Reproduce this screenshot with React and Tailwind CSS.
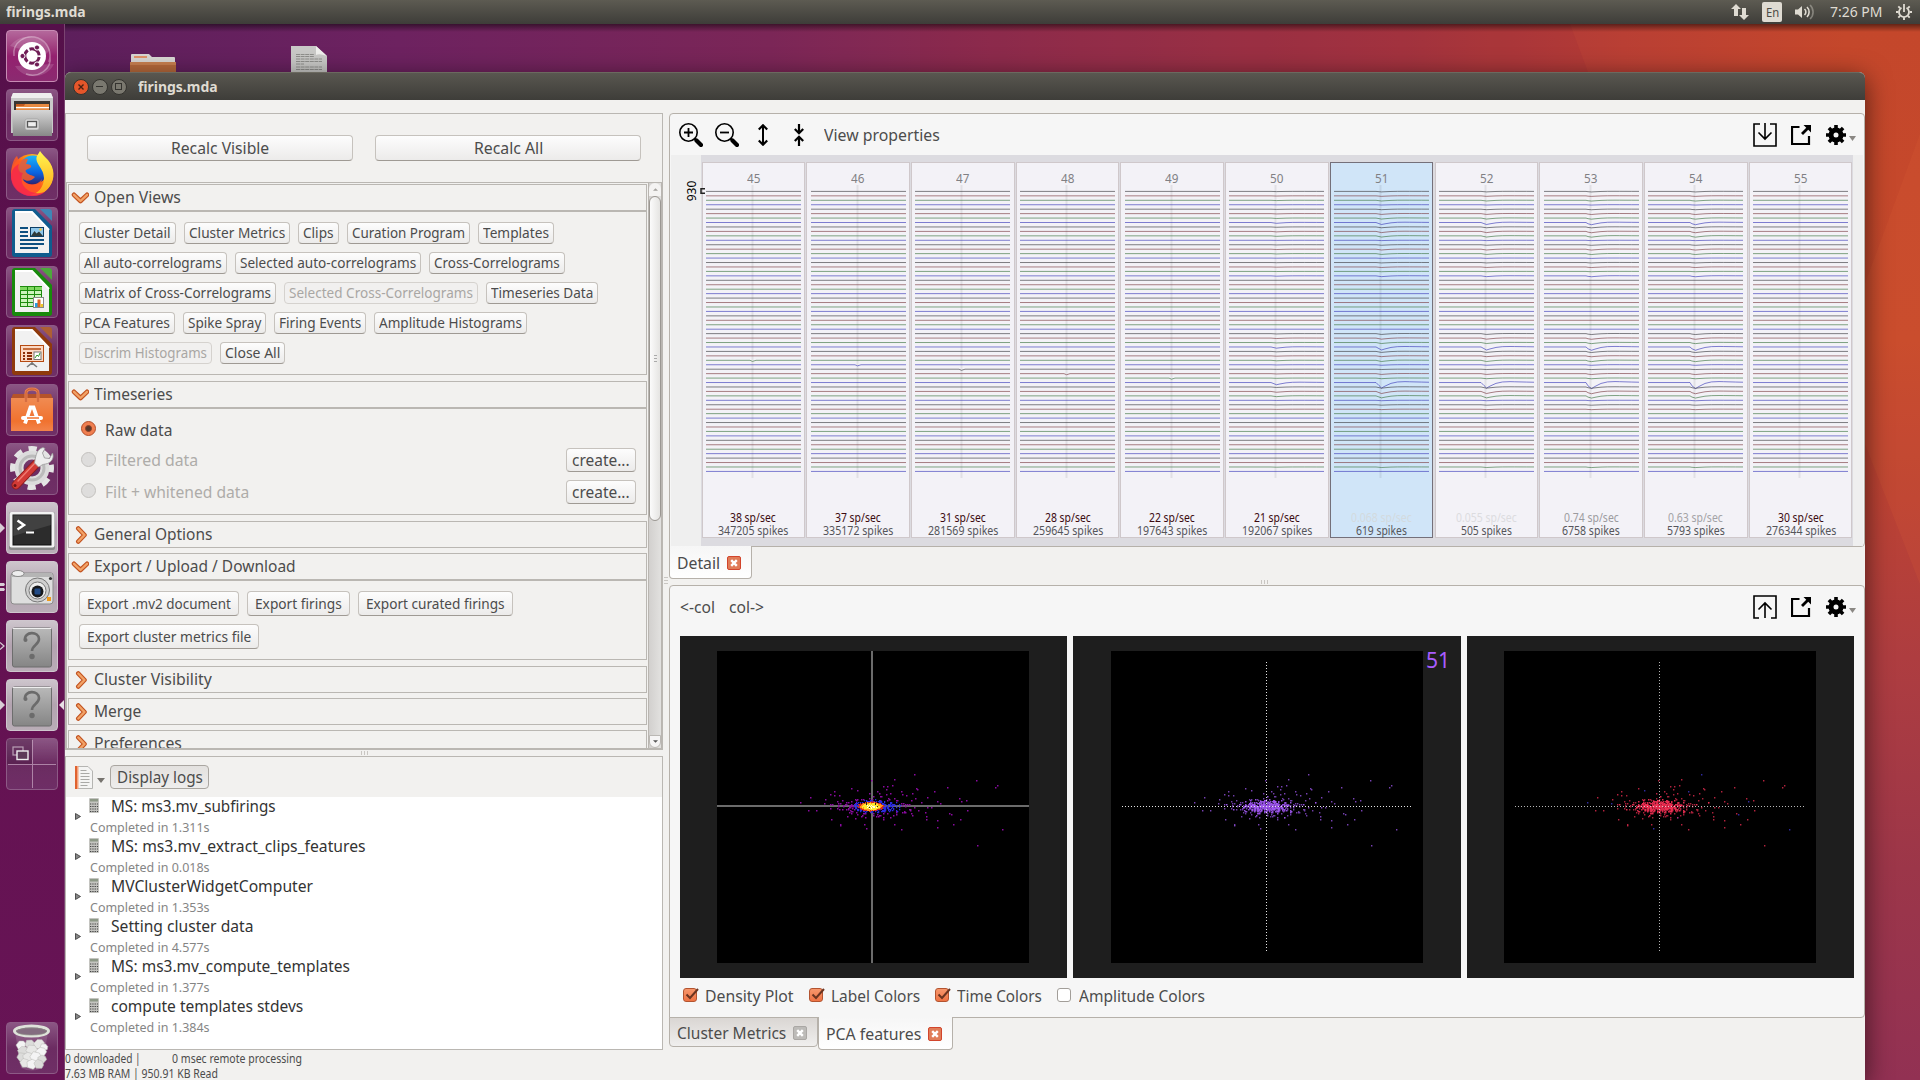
import React, { useLayoutEffect, useRef, useState } from "react";

/* ---------- text helper: condenses a label to a given width ---------- */
function Fit({ w, className = "", children }) {
  const ref = useRef(null);
  const [k, setK] = useState(1);
  useLayoutEffect(() => {
    const n = ref.current.offsetWidth;
    if (n) setK(w / n);
  }, [w]);
  return (
    <span className={"inline-flex shrink-0 leading-none whitespace-nowrap " + className} style={{ width: w }}>
      <span ref={ref} className="inline-block shrink-0 origin-left whitespace-pre" style={{ transform: `scaleX(${k})` }}>
        {children}
      </span>
    </span>
  );
}

/* ---------- seeded random numbers ---------- */
function rng(seed) {
  let s = seed;
  return () => {
    s = (s * 1664525 + 1013904223) % 4294967296;
    return s / 4294967296;
  };
}

/* ---------- top bar ---------- */
function TopBar() {
  return (
    <header className="relative z-20 flex h-6 shrink-0 items-center bg-gradient-to-b from-[#5d5b52] to-[#3e3d39] pr-2 pl-1.5 text-[#dfdbd2]">
      <Fit w={80} className="mb-px text-[15px] font-bold">firings.mda</Fit>
      <div className="ml-auto flex items-center">
        <svg className="h-[18px] w-[18px]" viewBox="0 0 18 18" fill="#dfdbd2">
          <path d="M5 1l5 5H7v7H3V6H0zM13 17l-5-5h3V5h4v7h3z" />
        </svg>
        <div className="ml-[13px] flex h-5 w-5 items-center justify-center rounded-[2px] bg-[#dfdbd2] text-[#4b4a44]">
          <Fit w={13} className="mt-px text-[13px]">En</Fit>
        </div>
        <svg className="ml-[13px] h-4 w-5" viewBox="0 0 20 16" fill="none" stroke="#dfdbd2" strokeWidth="1.6">
          <path d="M0 5.500h3l4-3.500v12l-4-3.500H0z" fill="#dfdbd2" stroke="none" />
          <path d="M9.500 5a4 4 0 0 1 0 6" />
          <path d="M12 3a7 7 0 0 1 0 10" />
          <path d="M15 1a9.500 9.500 0 0 1 0 14" opacity=".4" />
        </svg>
        <Fit w={52} className="ml-[15px] mb-px text-[14.500px]">7:26 PM</Fit>
        <svg className="ml-[14px] h-4 w-4" viewBox="0 0 16 16" fill="none" stroke="#dfdbd2">
          <path d="M5.500 3.700a5 5 0 1 0 5 0" strokeWidth="1.800" />
          <path d="M8 0v8" strokeWidth="1.800" />
          <path d="M0 8h2.500M13.500 8H16M8 13.500V16M2.300 2.300l1.800 1.800M13.700 2.300l-1.800 1.800M2.300 13.700l1.800-1.800M13.700 13.700l-1.800-1.800" strokeWidth="1.900" />
        </svg>
      </div>
    </header>
  );
}

/* ---------- launcher ---------- */
const Ico = ({ children }) => (
  <svg className="h-[52px] w-[52px] shrink-0" viewBox="0 0 52 52">{children}</svg>
);

const UbuntuIcon = () => (
  <Ico>
    <path d="M8 26C6 12 20 4 32 8c10 4 14 14 11 24M44 26c2 14-12 22-24 18" fill="none" stroke="#fff" strokeOpacity=".35" strokeWidth="1.500" />
    <path d="M4 16C14 2 36 4 44 20L38 26z M48 34C40 50 18 50 9 36z" fill="#fff" fillOpacity=".14" />
    <circle cx="26" cy="26" r="14" fill="#fff" />
    <circle cx="26" cy="26" r="7.200" fill="none" stroke="#6f1c55" strokeWidth="3" strokeDasharray="13.100 2" strokeDashoffset="-1" />
    <circle cx="16.500" cy="26" r="2.600" fill="#6f1c55" stroke="#fff" strokeWidth="1" />
    <circle cx="31" cy="17.500" r="2.600" fill="#6f1c55" stroke="#fff" strokeWidth="1" />
    <circle cx="31" cy="34.500" r="2.600" fill="#6f1c55" stroke="#fff" strokeWidth="1" />
  </Ico>
);

const FilesIcon = () => (
  <Ico>
    <defs>
      <linearGradient id="cab" x1="0" y1="0" x2="0" y2="1"><stop offset="0" stopColor="#d6d6d6" /><stop offset="1" stopColor="#888" /></linearGradient>
    </defs>
    <path d="M7 4h38l2 5v35H5V9z" fill="#c9c9c9" />
    <path d="M7 4h38l2 5H5z" fill="#eee" />
    <path d="M8 12h36v10H8z" fill="#3a3632" />
    <path d="M10 15h33v7H10z" fill="#c25a1e" />
    <path d="M10 17h8l1-2h24v7H10z" fill="#e88b42" />
    <path d="M10 18h33v1.200H10z" fill="#fff" />
    <path d="M6 21h40v26H7z" fill="url(#cab)" />
    <rect x="19" y="30" width="14" height="11" rx="2" fill="#d9d9d9" stroke="#999" strokeWidth=".6" />
    <rect x="21.500" y="32.500" width="9" height="5.500" fill="#eee" stroke="#555" strokeWidth="1.300" />
  </Ico>
);

const FirefoxIcon = () => (
  <Ico>
    <defs>
      <linearGradient id="ffA" x1="1" y1="0" x2="0.100" y2=".8"><stop offset="0" stopColor="#fff04a" /><stop offset=".4" stopColor="#ff9a10" /><stop offset=".7" stopColor="#ff4425" /><stop offset="1" stopColor="#e31587" /></linearGradient>
      <linearGradient id="ffB" x1="0" y1="0" x2="0" y2="1"><stop offset="0" stopColor="#18b5fa" /><stop offset=".6" stopColor="#0a62e0" /><stop offset="1" stopColor="#2b2270" /></linearGradient>
      <linearGradient id="ffC" x1="0" y1="0" x2="0" y2="1"><stop offset="0" stopColor="#fff650" /><stop offset="1" stopColor="#ffa516" /></linearGradient>
    </defs>
    <circle cx="26" cy="27" r="21" fill="url(#ffA)" />
    <circle cx="27" cy="22" r="14.500" fill="url(#ffB)" />
    <path d="M5 27C5 18 8 10 11 8l2 5c3 0 6-3 9-2l-2 5c3 0 6 1 5 3s-7 2-5 5c2 3 6 3 9 5-3 4-8 5-12 2 2 7 14 8 19 0l-4 15C18 50 6 42 5 27z" fill="#ff5a22" opacity=".85" />
    <path d="M34 3c2 3 5 6 8 9 7 8 7 19 2 26-5 8-14 10-20 9 8-1 14-8 14-17C38 20 28 15 31 8z" fill="url(#ffC)" />
    <path d="M5 28c0 12 9 20 21 20 5 0 9-1 13-4-9 3-18 0-22-7-2-4-2-9 0-12-4 0-6-5-4-9-4 2-8 6-8 12z" fill="#f4234f" opacity=".75" />
  </Ico>
);

function OfficeIcon({ a, b, kind }) {
  return (
    <Ico>
      <path d="M9 2h20l17 17v28q0 3-3 3H9q-3 0-3-3V5q0-3 3-3z" fill={b} />
      <path d="M34 2h9q3 0 3 3v9z" fill={a} />
      <path d="M9 5h17l17 18v23H9z" fill="#f1f1f1" />
      <path d="M9 5h17l17 18" fill="none" stroke="#fff" strokeWidth="2" />
      {kind === "w" && (
        <g>
          <path d="M14 21h8M14 25h8M14 29h8M14 33h24M14 37h24M14 41h18" stroke="#0d4f80" strokeWidth="2" />
          <rect x="24.500" y="20.500" width="13" height="9" fill="#8fc7ea" stroke="#0d3f66" />
          <path d="M25 29l3.500-5 2 2.500 2.500-2 4 4.500z" fill="#2e3a3a" />
          <circle cx="34.500" cy="22.500" r="1.200" fill="#f6c834" />
        </g>
      )}
      {kind === "c" && (
        <g>
          <rect x="14.500" y="20.500" width="21" height="20" fill="#cdf3bd" stroke="#1d8a0e" />
          <path d="M14 21h22v3H14z" fill="#7fd960" />
          <path d="M14 24.500h22M14 28.500h22M14 32.500h22M14 36.500h22M21.500 21v20M28.500 21v20" stroke="#1d8a0e" />
          <rect x="27.500" y="31.500" width="10" height="10" fill="#fff" stroke="#888" />
          <path d="M29 37h3v4h-3z" fill="#2a9fe0" /><path d="M31.500 33.500h3V41h-3z" fill="#e0641f" /><path d="M34.500 38h2.500v3h-2.500z" fill="#efc52b" />
        </g>
      )}
      {kind === "i" && (
        <g>
          <rect x="14.500" y="20.500" width="23" height="16" fill="#fbd9c4" stroke="#b54a12" />
          <path d="M17 24h18" stroke="#b54a12" strokeWidth="1.500" />
          <path d="M17 28h2M17 31h2M17 34h2M21 28h5M21 31h5M21 34h5" stroke="#8b2e08" strokeWidth="1.800" />
          <rect x="28" y="27" width="7" height="7.500" fill="#fff" stroke="#777" />
          <path d="M29 33l2-3 1.500 1.500L34 28" fill="none" stroke="#2e9d2b" />
          <path d="M26 37v3M21 42l5-4 5 4" stroke="#777" strokeWidth="1.600" fill="none" />
        </g>
      )}
    </Ico>
  );
}

const SoftwareIcon = () => (
  <Ico>
    <defs><linearGradient id="bag" x1="0" y1="0" x2="0" y2="1"><stop offset="0" stopColor="#f08b52" /><stop offset=".7" stopColor="#f0722f" /><stop offset="1" stopColor="#f2844b" /></linearGradient></defs>
    <path d="M7 10h38l2 5H5z" fill="#b5532a" />
    <path d="M5 14h42v33H5z" fill="url(#bag)" />
    <path d="M20 18V9q0-4 6-4t6 4v9" fill="none" stroke="#e78052" strokeWidth="3" />
    <path d="M20 18V9q0-4 6-4t6 4v9" fill="none" stroke="#b94f24" strokeWidth=".7" />
    <path d="M19 39.500l5.500-16h3l5.500 16" fill="none" stroke="#fff" strokeWidth="3.800" />
    <path d="M17 34h18" stroke="#fff" strokeWidth="4" strokeLinecap="round" />
    <path d="M21 34h12" stroke="#f0742f" strokeWidth="1.500" />
  </Ico>
);

const SettingsIcon = () => (
  <Ico>
    <circle cx="26" cy="25" r="13" fill="none" stroke="#dcdcdc" strokeWidth="9" />
    <circle cx="26" cy="25" r="19.500" fill="none" stroke="#e4e4e4" strokeWidth="5" strokeDasharray="8.300 7" strokeDashoffset="4" />
    <circle cx="26" cy="25" r="12" fill="none" stroke="#bbb" strokeWidth="3" />
    <path d="M10 42L30 21" stroke="#8f1c1c" strokeWidth="9" strokeLinecap="round" />
    <path d="M10 42L30 21" stroke="#d23a35" strokeWidth="7" strokeLinecap="round" />
    <path d="M12 38L29 20" stroke="#ef7a70" strokeWidth="1.500" strokeLinecap="round" />
    <circle cx="9" cy="42.500" r="1.500" fill="#6b1414" />
    <path d="M29 17c1-5 2-11 8-12.500l2 1-2.500 4.500 2 5 5 .5L46.500 10c2 5-1 9-5 10.500-3 1-5 .5-7 2.500l-2 1-4-4z" fill="#eee" stroke="#999" strokeWidth=".8" />
  </Ico>
);

const TerminalIcon = () => (
  <Ico>
    <rect x="3" y="10" width="46" height="38" rx="2" fill="#8a8a8a" />
    <rect x="3.500" y="10" width="45" height="35.500" rx="2" fill="#f3f3f3" />
    <rect x="7" y="13" width="38" height="30" fill="#2c2c2c" stroke="#111" />
    <path d="M7 13h38v10L7 34z" fill="#fff" opacity=".1" />
    <path d="M11.500 18.500l6.500 4.500-6.500 4.500" fill="none" stroke="#fff" strokeWidth="2.500" />
    <path d="M20 30.500h8" stroke="#fff" strokeWidth="2" />
  </Ico>
);

const CameraIcon = () => (
  <Ico>
    <path d="M7 12h38q2 0 2 2v26q0 3-3 3H8q-3 0-3-3V15q0-3 2-3z" fill="#dedede" stroke="#8b8b8b" />
    <path d="M6 12h40v4H6z" fill="#b5b5b5" />
    <ellipse cx="12" cy="12.500" rx="6" ry="3" fill="#eee" stroke="#777" strokeWidth=".8" />
    <circle cx="31.500" cy="29" r="12" fill="#cfcfcf" stroke="#777" />
    <circle cx="31.500" cy="29.500" r="8.500" fill="#eee" stroke="#777" />
    <circle cx="31.500" cy="30.500" r="6" fill="#16181c" />
    <rect x="28.500" y="27.500" width="6" height="6" rx="1" fill="#214a86" />
    <circle cx="44.500" cy="17.500" r="1.600" fill="#333" />
    <path d="M41 36h4v4h-4z" fill="#f09a1a" />
  </Ico>
);

const UnknownIcon = () => (
  <Ico>
    <defs><linearGradient id="unk" x1="0" y1="0" x2="0" y2="1"><stop offset="0" stopColor="#b9b9b9" /><stop offset="1" stopColor="#858585" /></linearGradient></defs>
    <rect x="6.500" y="8" width="39" height="39" rx="2" fill="url(#unk)" stroke="#6d6d6d" />
    <path d="M7 8.500h38" stroke="#eee" />
    <path d="M19 20c-1-9 14-9 14-1 0 6-7 6-7 12" fill="none" stroke="#6b6b6b" strokeWidth="2.600" />
    <circle cx="19.500" cy="20" r="2" fill="#6b6b6b" />
    <circle cx="26" cy="36.500" r="2.700" fill="#6b6b6b" />
  </Ico>
);

const WorkspaceIcon = () => (
  <Ico>
    <path d="M0 0h26v26H0z" fill="#3b1036" opacity=".35" />
    <path d="M26.500 2v48M2 26.500h48" stroke="#d9bcd4" strokeWidth="1" opacity=".6" />
    <rect x="7" y="9" width="10" height="8" fill="none" stroke="#b9a0b5" strokeWidth="1.200" />
    <rect x="11" y="13" width="11" height="8.500" fill="#5d3a58" stroke="#eee" strokeWidth="1.400" />
  </Ico>
);

const TrashIcon = () => {
  const bits = [
    [15, 23, 5], [24, 22, 5], [33, 22, 5.5], [38, 25, 4], [17, 29, 5.5], [26, 28, 6], [35, 30, 5.5],
    [16, 35, 5], [22, 35, 5.5], [30, 35, 6], [36, 37, 4.5], [19, 41, 5], [26, 42, 5.5], [33, 42, 5],
  ];
  return (
    <Ico>
      <path d="M9 10l6 36q11 5 21 0l6-36z" fill="#fff" opacity=".13" />
      {bits.map(([x, y, q], i) => (
        <path key={i} transform={`translate(${x} ${y}) rotate(${(i * 47) % 90})`} d={`M${-q} 0L${-q / 3} ${-q * 0.8}L${q * 0.5} ${-q * 0.8}L${q} ${-q / 4}L${q * 0.6} ${q * 0.8}L${-q / 2} ${q * 0.9}z`} fill={["#f4f4f4", "#dcdcda", "#e8e8e6"][i % 3]} stroke="#bcbcb9" strokeWidth=".5" />
      ))}
      <ellipse cx="25.500" cy="9" rx="17" ry="5" fill="#7a6677" stroke="#dfe2da" strokeWidth="3" />
      <ellipse cx="25.500" cy="9.500" rx="15" ry="3.500" fill="#846c80" stroke="#8d8d85" strokeWidth=".7" />
    </Ico>
  );
};

const TILE = {
  dark: "bg-gradient-to-b from-[#8b5684] via-[#6c2c62] to-[#6f2f66] border-[#8d5a86]",
  ubuntu: "bg-gradient-to-b from-[#b4689c] via-[#94206f] to-[#8b2a70] border-[#c78bb4]",
  light: "bg-gradient-to-b from-[#cdc5cc] via-[#b3a3b0] to-[#b9adb7] border-[#cfc6ce]",
};

const tiles = [
  { t: "ubuntu", i: <UbuntuIcon /> },
  { t: "dark", i: <FilesIcon /> },
  { t: "dark", i: <FirefoxIcon /> },
  { t: "dark", i: <OfficeIcon a="#3f86b5" b="#0f5c8e" kind="w" /> },
  { t: "dark", i: <OfficeIcon a="#4da83c" b="#188a0c" kind="c" /> },
  { t: "dark", i: <OfficeIcon a="#ad5f34" b="#8f3a0c" kind="i" /> },
  { t: "dark", i: <SoftwareIcon /> },
  { t: "dark", i: <SettingsIcon /> },
  { t: "light", i: <TerminalIcon />, l: "one" },
  { t: "light", i: <CameraIcon />, l: "two" },
  { t: "light", i: <UnknownIcon />, l: "open" },
  { t: "light", i: <UnknownIcon />, l: "one", r: true },
  { t: "dark", i: <WorkspaceIcon /> },
];

function Tile({ t, i, l, r }) {
  return (
    <div className="relative flex shrink-0 justify-center">
      {l && (
        <svg className="absolute top-[20px] left-0 h-3 w-[5px]" viewBox="0 0 5 12" fill="#d8cdd6">
          {l === "one" && <path d="M0 1l5 5-5 5z" />}
          {l === "open" && <path d="M0 2.500L4 6 0 9.500" fill="none" stroke="#d8cdd6" strokeWidth="1.200" />}
          {l === "two" && <path d="M0 2h4l1 1.500L4 5H0zM0 7h4l1 1.500L4 10H0z" />}
        </svg>
      )}
      <div className={"flex h-[52px] w-[52px] items-center justify-center overflow-hidden rounded-[4px] border " + TILE[t]}>{i}</div>
      {r && (
        <svg className="absolute top-[20px] right-0 h-3 w-[5px]" viewBox="0 0 5 12" fill="#e8e0e6"><path d="M5 1L0 6l5 5z" /></svg>
      )}
    </div>
  );
}

function Launcher() {
  return (
    <nav className="relative z-10 flex w-[65px] shrink-0 flex-col gap-[7px] border-r border-[#7b4471] bg-gradient-to-b from-[#55104a] via-[#631151] to-[#671455] pt-1.5 pb-1.5">
      {tiles.map((x, n) => <Tile key={n} {...x} />)}
      <div className="mt-auto"><Tile t="dark" i={<TrashIcon />} /></div>
    </nav>
  );
}

/* ---------- left panel ---------- */
function Btn({ w, h = "h-[22px]", pad = 5, size = "text-[14.500px]", shift = "mb-px", off, children }) {
  return (
    <button
      className={
        "flex shrink-0 items-center justify-center rounded-[4px] border " + h + " " + size +
        (off
          ? " border-[#d5d2ce] bg-[#f1f0ef] text-[#a9a7a4]"
          : " border-[#c6c2bd] border-b-[#9f9a94] bg-gradient-to-b from-[#fdfdfd] to-[#ecebea] text-[#4c4c4c]")
      }
      style={{ width: w }}
    >
      <Fit w={w - 2 * pad} className={shift}>{children}</Fit>
    </button>
  );
}

function Chevron({ open }) {
  return (
    <svg className="h-[18px] w-[18px]" viewBox="0 0 18 18" fill="none" strokeLinecap="round" strokeLinejoin="round">
      <g transform={open ? "translate(.5 0)" : "rotate(-90 9 9) translate(0 1.5)"}>
        <path d="M2.500 5.800L9 12l6.500-6.200" stroke="#c2521f" strokeWidth="4.600" />
        <path d="M2.500 5.800L9 12l6.500-6.200" stroke="#f2a266" strokeWidth="2.400" />
      </g>
    </svg>
  );
}

function Header({ title, w, open, className = "" }) {
  return (
    <div className={"flex h-[27px] shrink-0 items-center border border-[#bab7b2] pl-[2px] " + className}>
      <Chevron open={open} />
      <Fit w={w} className="ml-[5px] text-[16.500px]">{title}</Fit>
    </div>
  );
}

const viewRows = [
  [["Cluster Detail", 97], ["Cluster Metrics", 106], ["Clips", 41], ["Curation Program", 123], ["Templates", 76]],
  [["All auto-correlograms", 148], ["Selected auto-correlograms", 186], ["Cross-Correlograms", 136]],
  [["Matrix of Cross-Correlograms", 197], ["Selected Cross-Correlograms", 194, true], ["Timeseries Data", 112]],
  [["PCA Features", 96], ["Spike Spray", 83], ["Firing Events", 92], ["Amplitude Histograms", 153]],
  [["Discrim Histograms", 133, true], ["Close All", 65]],
];

function Radio({ on }) {
  return on ? (
    <span className="flex h-[15px] w-[15px] items-center justify-center rounded-full border border-[#b4502b] bg-[#f07f50]">
      <span className="h-[7px] w-[7px] rounded-full border border-[#8b4127] bg-[#59382b]" />
    </span>
  ) : (
    <span className="h-[15px] w-[15px] rounded-full border border-[#c3c1be] bg-[#dedddc]" />
  );
}

function Series({ label, w, on, h }) {
  return (
    <div className={"flex items-center " + h + (on ? "" : " text-[#aeaca9]")}>
      <Radio on={on} />
      <Fit w={w} className="mt-[3px] ml-[9px] text-[16.500px]">{label}</Fit>
      {!on && <div className="mt-[2px] mr-[10px] ml-auto"><Btn w={70} h="h-6" pad={6} size="text-[16px]" shift="">create...</Btn></div>}
    </div>
  );
}

function ScrollBar() {
  return (
    <div className="flex w-[14px] shrink-0 flex-col border-x border-[#b9b5b0] bg-gradient-to-r from-[#d2d0ce] to-[#e2e1df]">
      <div className="flex h-[13px] shrink-0 items-center justify-center rounded-t-full bg-[#f4f3f2] text-[#a5a29e]">
        <svg className="h-[3px] w-[5px]" viewBox="0 0 6 3" fill="currentColor"><path d="M3 0l3 3H0z" /></svg>
      </div>
      <div className="flex h-[325px] shrink-0 items-center justify-center rounded-[6px] border border-[#9b9792] bg-gradient-to-r from-[#fbfbfb] to-[#e5e4e2]">
        <div className="flex w-[3px] flex-col gap-[2px]"><i className="h-px bg-[#aaa]" /><i className="h-px bg-[#aaa]" /><i className="h-px bg-[#aaa]" /></div>
      </div>
      <div className="grow" />
      <div className="flex h-[13px] shrink-0 items-center justify-center rounded-b-full border border-[#bbb8b4] bg-[#f6f5f5] text-[#555]">
        <svg className="h-[3px] w-[5px]" viewBox="0 0 6 3" fill="currentColor"><path d="M0 0h6L3 3z" /></svg>
      </div>
    </div>
  );
}

function Controls() {
  return (
    <section className="flex h-[637px] shrink-0 flex-col border border-b-2 border-[#bab7b2]">
      <div className="flex h-[68px] shrink-0 gap-[22px] pt-[21px] pl-[21px]">
        <Btn w={266} h="h-[26px]" pad={84} size="text-[16.500px]" shift="mt-px">Recalc Visible</Btn>
        <Btn w={266} h="h-[26px]" pad={98.5} size="text-[16.500px]" shift="mt-px">Recalc All</Btn>
      </div>
      <div className="flex min-h-0 grow border-t border-[#bab7b2]">
        <div className="flex min-w-0 grow flex-col overflow-hidden border-l border-[#bab7b2] pt-px pr-px pl-px">
          <Header open title="Open Views" w={87} />
          <div className="flex h-[164px] shrink-0 flex-col gap-2 border border-[#bab7b2] pt-[10px] pl-[10px]">
            {viewRows.map((row, i) => (
              <div key={i} className="flex gap-2">
                {row.map(([t, w, off]) => <Btn key={t} w={w} off={off}>{t}</Btn>)}
              </div>
            ))}
          </div>
          <Header open title="Timeseries" w={79} className="mt-[6px]" />
          <div className="flex h-[107px] shrink-0 flex-col border border-[#bab7b2] pt-1 pl-[12px]">
            <Series on label="Raw data" w={67} h="h-[31px]" />
            <Series label="Filtered data" w={93} h="h-[30px]" />
            <Series label="Filt + whitened data" w={144} h="h-[33px]" />
          </div>
          <Header title="General Options" w={118} className="mt-[6px]" />
          <Header open title="Export / Upload / Download" w={202} className="mt-[5px]" />
          <div className="flex h-[80px] shrink-0 flex-col gap-2 border border-[#bab7b2] pt-[10px] pl-[10px]">
            <div className="flex gap-2">
              <Btn w={160} h="h-[25px]" pad={8}>Export .mv2 document</Btn>
              <Btn w={103} h="h-[25px]" pad={8}>Export firings</Btn>
              <Btn w={155} h="h-[25px]" pad={8}>Export curated firings</Btn>
            </div>
            <Btn w={180} h="h-[25px]" pad={8}>Export cluster metrics file</Btn>
          </div>
          <Header title="Cluster Visibility" w={118} className="mt-[6px]" />
          <Header title="Merge" w={47} className="mt-[5px]" />
          <Header title="Preferences" w={88} className="mt-[5px]" />
        </div>
        <ScrollBar />
      </div>
    </section>
  );
}

const logs = [
  ["MS: ms3.mv_subfirings", 165, "1.311s"],
  ["MS: ms3.mv_extract_clips_features", 255, "0.018s"],
  ["MVClusterWidgetComputer", 202, "1.353s"],
  ["Setting cluster data", 142, "4.577s"],
  ["MS: ms3.mv_compute_templates", 239, "1.377s"],
  ["compute templates stdevs", 192, "1.384s"],
];

function Logs() {
  return (
    <section className="flex h-[294px] shrink-0 flex-col border border-[#bab7b2]">
      <div className="flex h-10 shrink-0 items-center pl-[9px]">
        <svg className="h-[23px] w-[18px]" viewBox="0 0 18 23">
          <path d="M1 .5h12l4.500 4.500v17.500H1z" fill="#f4f4f3" stroke="#b5b5b2" />
          <path d="M0 0h2.500v23H0z" fill="#e0622f" />
          <path d="M2 0h1.500v23H2z" fill="#f3a27d" />
          <path d="M5.500 4.500h6M5.500 7.500h9M5.500 10.500h9M5.500 13.500h9M5.500 16.500h9M5.500 19.500h7" stroke="#a9a9a6" />
        </svg>
        <svg className="mt-1.5 ml-1 h-[5px] w-[8px]" viewBox="0 0 8 5"><path d="M0 0h8L4 5z" fill="#77746f" /></svg>
        <button className="ml-[5px] flex h-6 w-[99px] items-center justify-center rounded-[4px] border border-[#aaa6a1] bg-gradient-to-b from-[#e3e1df] to-[#eeedec] text-[16.500px]">
          <Fit w={86} className="ml-px">Display logs</Fit>
        </button>
      </div>
      <ul className="grow bg-white">
        {logs.map(([t, w, s], i) => (
          <li key={i} className="relative flex h-10 pl-[23px]">
            <svg className="absolute top-[16px] left-[9px] h-[7px] w-[6px]" viewBox="0 0 6 7"><path d="M.5.5L5.500 3.500l-5 3z" fill="#888" stroke="#333" strokeWidth=".8" /></svg>
            <div className="flex flex-col">
              <div className="flex h-[20px] items-start">
                <svg className="mt-px h-[15px] w-[10px]" viewBox="0 0 10 15">
                  <rect width="10" height="15" rx="1" fill="#c4c4c0" />
                  <path d="M1 1h8v2.500H1z" fill="#8d9886" />
                  <path d="M1 6h8M1 8.500h8M1 11h8M1 13.500h8" stroke="#444" strokeWidth="1.200" strokeDasharray="1.300 1" />
                </svg>
                <Fit w={w} className="mt-px ml-[12px] text-[16.500px] text-[#333]">{t}</Fit>
              </div>
              <Fit w={120} className="mt-1 ml-px text-[13px] text-[#858585]">{"Completed in " + s}</Fit>
            </div>
          </li>
        ))}
      </ul>
    </section>
  );
}

function StatusLines() {
  return (
    <footer className="flex flex-col gap-[3px] pt-[3px] text-[12px] text-[#4c4c4c]">
      <div className="flex gap-[31px]">
        <Fit w={76}>0 downloaded |</Fit>
        <Fit w={130}>0 msec remote processing</Fit>
      </div>
      <Fit w={153}>7.63 MB RAM | 950.91 KB Read</Fit>
    </footer>
  );
}

/* ---------- templates view ---------- */
const cols = [
  { n: 45, r: "38", s: 347205, dip: 38 },
  { n: 46, r: "37", s: 335172, dip: 39 },
  { n: 47, r: "31", s: 281569, dip: 40 },
  { n: 48, r: "28", s: 259645, dip: 41 },
  { n: 49, r: "22", s: 197643, dip: 42 },
  { n: 50, r: "21", s: 192067, k: 0.4 },
  { n: 51, r: "0.068", s: 619, k: 1, sel: true, faint: "text-[#d3dade]" },
  { n: 52, r: "0.055", s: 505, k: 1, faint: "text-[#dcdcdf]" },
  { n: 53, r: "0.74", s: 6758, k: 1.1, faint: "text-[#9c9b9f]" },
  { n: 54, r: "0.63", s: 5793, k: 1.1, faint: "text-[#a3a2a6]" },
  { n: 55, r: "30", s: 276344 },
];

const DEPTH = {
  0: 0.5, 1: 0.5, 2: 0.7, 3: 0.3, 4: 0.5, 5: 0.8, 6: 1, 7: 2, 8: 0.8, 9: 1.2, 10: 1.2, 11: 0.3, 12: 0.5, 13: 0.8, 14: 0.8, 15: 0.3, 16: 0.4, 17: 0.5, 18: 0.3, 19: 0.8,
  32: 0.8, 33: 1.1, 34: 1, 35: 3, 36: 1, 37: 0.8, 38: 1.2, 39: 0.5, 40: 0.3, 41: 0.8, 42: 0.6, 43: 5.5, 44: 1.2, 45: 2.1, 46: 2, 47: 0.4, 48: 0.4, 49: 0.4, 62: 0.5,
};
const INK = ["#3a3a3f", "#7a3c40", "#3c7440", "#3a3ab8"];

function Traces({ c }) {
  return (
    <svg className="block h-[294px] w-[97px] shrink-0" viewBox="0 0 97 294" fill="none">
      <path d="M47.500 0v293" stroke="#000" strokeOpacity=".07" strokeWidth="2" />
      {Array.from({ length: 64 }, (_, i) => {
        const y = 6.4 + i * 4.445;
        let d = `M1 ${y}H96`;
        const a = c.k ? (DEPTH[i] || 0) * c.k : 0;
        if (a) d = `M1 ${y}H43L${c.k > 1 ? 45 : 46} ${y + a * 0.55}L48.500 ${y + a}L52 ${y + a * 0.65}L58 ${y + a * 0.15}Q64 ${y - a * 0.2} 72 ${y - a * 0.16}T96 ${y - a * 0.05}`;
        else if (c.dip === i) d = `M1 ${y}H45L47.500 ${y + 1.1}L51 ${y}H96`;
        return <path key={i} d={d} stroke={INK[i % 4]} strokeWidth="1" strokeOpacity=".64" />;
      })}
    </svg>
  );
}

function Column({ c }) {
  return (
    <div className="flex w-[104.720px] shrink-0 justify-center">
      <div className={"flex w-[103.500px] flex-col items-center border " + (c.sel ? "border-[#74707a] bg-[#d0e5f8]" : "border-[#cfc8cb] bg-[#f3f2f7]")}>
        <Fit w={13.5} className="mt-[9px] text-[13px] text-[#808084]">{c.n}</Fit>
        <Traces c={c} />
        <Fit w={c.faint ? (c.r.length > 4 ? 61 : 55) : 46} className={"mt-[33px] text-[12px] " + (c.faint || "text-[#3b0a10]")}>
          {c.r + " sp/sec"}
        </Fit>
        <Fit w={c.s > 9999 ? 70 : c.s > 999 ? 58 : 51} className="mt-px text-[12px] text-[#55555a]">{c.s + " spikes"}</Fit>
      </div>
    </div>
  );
}

/* ---------- toolbar icons ---------- */
function Mag({ minus }) {
  return (
    <svg className="h-6 w-6" viewBox="0 0 24 24" fill="none" stroke="#000">
      <circle cx="9.500" cy="9.500" r="8.700" strokeWidth="1.600" />
      <path d={minus ? "M5 9.500h9" : "M5 9.500h9M9.500 5v9"} strokeWidth="1.800" />
      <path d="M15.500 15.500l2 2" strokeWidth="2" />
      <path d="M17.500 17.500l4.500 4.500" strokeWidth="4.200" strokeLinecap="round" />
    </svg>
  );
}

function RightIcons({ up }) {
  return (
    <div className="ml-auto flex items-center">
      <svg className="h-6 w-6" viewBox="0 0 24 24" fill="none" stroke="#000">
        {up ? (
          <g>
            <path d="M6 23H1V1h22v22h-5" strokeWidth="1.600" />
            <path d="M12 23V8M5.500 14.500L12 8l6.500 6.500" strokeWidth="1.600" />
          </g>
        ) : (
          <g>
            <path d="M7 1H1v22h22V1h-6" strokeWidth="1.600" />
            <path d="M12 0v15.500M5.500 9.500L12 16l6.500-6.500" strokeWidth="1.600" />
          </g>
        )}
      </svg>
      <svg className="ml-[14px] h-5 w-5" viewBox="0 0 20 20" fill="none" stroke="#000">
        <path d="M8.500 2H1v17h17v-8" strokeWidth="2.200" />
        <path d="M11 9l6-6" strokeWidth="2.800" />
        <path d="M12.500 0H20v7.500z" fill="#000" stroke="none" />
      </svg>
      <svg className="ml-[15px] h-5 w-5" viewBox="0 0 20 20" fill="none" stroke="#000">
        <circle cx="10" cy="10" r="5" strokeWidth="5" />
        <path d="M10 0v4M10 16v4M0 10h4M16 10h4M2.900 2.900l3 3M14.100 14.100l3 3M2.900 17.100l3-3M14.100 5.900l3-3" strokeWidth="3.600" />
      </svg>
      <svg className="mt-[7px] ml-[3px] h-[5px] w-[7px]" viewBox="0 0 7 5"><path d="M0 0h7L3.500 5z" fill="#8b8884" /></svg>
    </div>
  );
}

function CloseBox({ on }) {
  return (
    <span className={"flex h-[14px] w-[14px] shrink-0 items-center justify-center rounded-[2px] border " + (on ? "border-[#d2452c] bg-[#e07c58]" : "border-[#aaa7a4] bg-[#bdbbb8]")}>
      <svg className="h-2 w-2" viewBox="0 0 8 8"><path d="M1.200 1.200l5.600 5.600M6.800 1.200L1.200 6.800" stroke="#fff" strokeWidth="2.400" /></svg>
    </span>
  );
}

function DetailPane() {
  return (
    <section className="flex h-[472px] shrink-0 flex-col">
      <div className="flex h-[434px] shrink-0 flex-col rounded-[4px] rounded-bl-none border border-[#b6b1aa] bg-[#f6f6f6]">
        <div className="flex h-[41px] shrink-0 items-center pr-[8px] pl-[9px]">
          <Mag />
          <div className="ml-3"><Mag minus /></div>
          <svg className="ml-[19px] h-[22px] w-[10px]" viewBox="0 0 10 22" fill="none" stroke="#000">
            <path d="M5 2v18" strokeWidth="2" />
            <path d="M.800 5.500L5 1.300l4.200 4.200M.800 16.500L5 20.700l4.200-4.200" strokeWidth="2.200" />
          </svg>
          <svg className="ml-[25.500px] h-[22px] w-[10px]" viewBox="0 0 10 22" fill="none" stroke="#000">
            <path d="M5 0v9M5 22v-9" strokeWidth="2.200" />
            <path d="M.800 5L5 9.200 9.200 5M.800 17L5 12.800 9.200 17" strokeWidth="2.200" />
          </svg>
          <Fit w={116} className="mt-[2px] ml-[20.500px] text-[16.500px]">View properties</Fit>
          <RightIcons />
        </div>
        <div className="mx-px flex min-h-0 grow bg-[#efefef]">
          <div className="flex w-[30px] shrink-0 justify-end pt-[27px]">
            <span className="flex h-[18px] w-4 items-center justify-center">
              <span className="-rotate-90 text-[12px] leading-none text-black">930</span>
            </span>
            <svg className="z-10 mt-[6px] mr-[-4px] h-[6px] w-[5px]" viewBox="0 0 5 6" fill="none" stroke="#222" strokeWidth="1.500"><path d="M5 .8H1v4.400h4" /></svg>
          </div>
          <div className="flex w-[1152px] bg-[#dcdbe0] pt-[7px] pb-[8px]">
            {cols.map((c) => <Column key={c.n} c={c} />)}
          </div>
        </div>
      </div>
      <div className="relative z-10 -mt-px flex h-[33px] w-[83px] items-center rounded-b-[4px] border border-t-0 border-[#b6b1aa] bg-gradient-to-b from-[#f6f6f6] to-white pl-[7px]">
        <Fit w={43} className="mt-[2px] text-[16.500px]">Detail</Fit>
        <div className="mt-px ml-[7px]"><CloseBox on /></div>
      </div>
    </section>
  );
}

/* ---------- PCA scatter ---------- */
const OUTLIERS = [
  [733, 462], [919, 479], [976, 502], [982, 496], [832, 500], [792, 514], [997, 628], [922, 674], [800, 621], [850, 611], [871, 597],
  [836, 580], [844, 583], [767, 597], [767, 587], [800, 601], [890, 570], [888, 541], [872, 544], [866, 534], [802, 544], [738, 503], [673, 476],
  [694, 628], [587, 625], [583, 612], [484, 597], [511, 611], [413, 570], [438, 570], [391, 547], [420, 531], [543, 503], [492, 514],
  [492, 524], [480, 522], [560, 511], [638, 498], [650, 497], [667, 496], [648, 507], [660, 518], [692, 514], [725, 520], [707, 525],
  [770, 531], [740, 508], [466, 538], [463, 550], [480, 553], [620, 514], [597, 519], [770, 560], [752, 547], [660, 590], [673, 611], [640, 592],
].map(([x, y]) => [(x - 141) / 3, (y - 93) / 3]);

const CLOUD = (() => {
  const r = rng(77);
  const g = () => Math.sqrt(-2 * Math.log(r() + 1e-9)) * Math.cos(6.2832 * r());
  const pts = [];
  for (let i = 0; i < 340; i++) pts.push([154 + g() * 11, 155 + g() * 3]);
  for (let i = 0; i < 160; i++) pts.push([157 + g() * 19, 155 + g() * 4.5]);
  for (let i = 0; i < 50; i++) pts.push([166 + g() * 24, 156 + g() * 7]);
  return pts;
})();

const dot = ([x, y], s) => `M${Math.round(x)} ${Math.round(y)}h${s}v${s}h-${s}z`;
const dots = (list, s) => list.map((p) => dot(p, s)).join("");

function Density() {
  const r = rng(9);
  const core = { p: [], b: [], r: [], o: [], y: [], w: [] };
  [...OUTLIERS, ...CLOUD].forEach((p) => {
    const e = Math.hypot((p[0] - 154) / 18, (p[1] - 155) / 7);
    const right = p[0] > 165 && p[0] < 184 && Math.abs(p[1] - 155) < 5;
    core[e < 1 || right ? "b" : "p"].push(p);
  });
  for (let y = 150; y < 161; y++)
    for (let x = 140; x < 168; x++) {
      const e = Math.hypot((x - 153.5) / 13, (y - 155) / 4.8) + (r() - 0.5) * 0.16;
      if (e > 1) continue;
      core[e > 0.84 ? "r" : e > 0.66 ? "o" : e > 0.4 ? "y" : r() > 0.35 ? "w" : "y"].push([x, y]);
    }
  return (
    <g>
      <path d="M155 0v312M0 155h312" stroke="#6b6b6b" strokeWidth="2" fill="none" />
      <path d={dots(core.p, 1.5)} fill="#8a0aa0" />
      <path d={dots(core.b, 1.3)} fill="#2b2be0" />
      <path d={dots(core.r, 1)} fill="#d42a1c" />
      <path d={dots(core.o, 1)} fill="#ff9a18" />
      <path d={dots(core.y, 1)} fill="#ffe92e" />
      <path d={dots(core.w, 1)} fill="#fffde0" />
      <path d="M149 151h1v3h-1zM158 152h1v2h-1zM152 156h1v1h-1zM160 155h1v1h-1z" fill="#2a2410" />
    </g>
  );
}

function Dotted({ color, alt }) {
  const far = OUTLIERS.filter((_, i) => !alt || i % 6);
  const odd = alt ? OUTLIERS.filter((_, i) => i % 6 === 0) : [];
  return (
    <g>
      <path d={dots(far, 1.4)} fill={color} fillOpacity=".7" />
      <path d={dots(odd, 1.4)} fill="#3b35c8" fillOpacity=".8" />
      <path d={dots(CLOUD.slice(0, 340), 1.5)} fill={color} fillOpacity=".85" />
      <path d={dots(CLOUD.slice(340), 1.4)} fill={color} fillOpacity=".65" />
      <path d="M155.500 11v289M11 155.500h290" stroke="#e4e4e4" strokeWidth="1" strokeDasharray="1 2" fill="none" strokeOpacity={alt ? 0.8 : 1} />
    </g>
  );
}

function Plot({ children, label, w, inset = "pl-[37px]" }) {
  return (
    <div className={"relative flex h-[342px] shrink-0 items-center bg-[#1e1e1e] " + inset} style={{ width: w }}>
      <svg className="h-[312px] w-[312px] bg-black" viewBox="0 0 312 312">{children}</svg>
      {label && <Fit w={24} className="absolute top-[12px] right-[11px] text-[22px] text-[#a95cff]">{label}</Fit>}
    </div>
  );
}

function Check({ label, w, on }) {
  return (
    <label className="flex items-center gap-2">
      <span className={"relative flex h-[14px] w-[14px] rounded-[3px] border " + (on ? "border-[#b35430] bg-gradient-to-b from-[#f7976c] to-[#ee7344]" : "border-[#a29e99] bg-white")}>
        {on && (
          <svg className="absolute -top-px left-0 h-[13px] w-[15px]" viewBox="0 0 15 13"><path d="M2.500 6.500l3.500 3.500L14 1" fill="none" stroke="#6b3420" strokeWidth="2" /></svg>
        )}
      </span>
      <Fit w={w} className="mt-[2px] text-[16.500px]">{label}</Fit>
    </label>
  );
}

function PcaPane() {
  return (
    <section className="flex grow flex-col">
      <div className="flex h-[433px] shrink-0 flex-col rounded-[4px] rounded-bl-none border border-[#b6b1aa] bg-[#f6f6f6]">
        <div className="flex h-[42px] shrink-0 items-center pr-[8px] pl-[10px]">
          <Fit w={35} className="mt-px text-[16.500px]">{"<-col"}</Fit>
          <Fit w={35} className="mt-px ml-[14px] text-[16.500px]">{"col->"}</Fit>
          <RightIcons up />
        </div>
        <div className="mt-2 ml-[10px] flex gap-[6px]">
          <Plot w={387}><Density /></Plot>
          <Plot w={388} label="51" inset="pl-[38px]"><Dotted color="#a95cff" /></Plot>
          <Plot w={387}><Dotted color="#ff3158" alt /></Plot>
        </div>
        <div className="flex grow items-center gap-[15px] pb-[5px] pl-[13px]">
          <Check on label="Density Plot" w={89} />
          <Check on label="Label Colors" w={89} />
          <Check on label="Time Colors" w={85} />
          <Check label="Amplitude Colors" w={126} />
        </div>
      </div>
      <div className="relative z-10 -mt-px flex items-start">
        <div className="flex h-[30px] w-[149px] items-center rounded-b-[4px] border border-[#b6b1aa] bg-gradient-to-b from-[#dad6d3] to-[#f0efee] pl-[7px]">
          <Fit w={109} className="mt-[2px] text-[16.500px]">Cluster Metrics</Fit>
          <div className="mt-px ml-[7px]"><CloseBox /></div>
        </div>
        <div className="flex h-[33px] w-[135px] items-center rounded-b-[4px] border border-t-0 border-[#b6b1aa] bg-gradient-to-b from-[#f6f6f6] to-white pl-[7px]">
          <Fit w={95} className="mt-[2px] text-[16.500px]">PCA features</Fit>
          <div className="mt-px ml-[7px]"><CloseBox on /></div>
        </div>
      </div>
    </section>
  );
}

/* ---------- window ---------- */
function TitleBar() {
  const b = "flex h-4 w-4 items-center justify-center rounded-full border border-[#33322e] ";
  return (
    <div className="flex h-7 shrink-0 items-center rounded-t-[6px] border-t border-[#6b695f] bg-gradient-to-b from-[#595750] to-[#3e3d39] pl-[7.500px]">
      <div className="flex gap-[3px]">
        <span className={b + "bg-[#e5562a]"}>
          <svg className="h-2 w-2" viewBox="0 0 8 8"><path d="M1.500 1.500l5 5M6.500 1.500l-5 5" stroke="#4a2013" strokeWidth="1.400" /></svg>
        </span>
        <span className={b + "bg-[#7a786f]"}><i className="h-px w-[7px] bg-[#34332f]" /></span>
        <span className={b + "bg-[#7a786f]"}><i className="h-[7px] w-[7px] border border-[#34332f]" /></span>
      </div>
      <Fit w={80} className="ml-[11.500px] text-[15px] font-bold text-[#dfdbd2]">firings.mda</Fit>
    </div>
  );
}

const Grip = ({ vertical }) => (
  <div className={"flex gap-[2px] " + (vertical ? "flex-col" : "")}>
    {[0, 1, 2].map((i) => <i key={i} className={"bg-[#c9c6c2] " + (vertical ? "h-px w-1" : "h-1 w-px")} />)}
  </div>
);

export default function App() {
  return (
    <div className="flex h-[1080px] w-[1920px] flex-col overflow-hidden font-['Noto_Sans','Open_Sans',sans-serif] text-[#4c4c4c]">
      <TopBar />
      <div className="flex min-h-0 grow">
        <Launcher />
        <main className="relative flex min-w-0 grow flex-col bg-[linear-gradient(90deg,#5d1f5c_0%,#6d2260_18%,#7b2657_38%,#8f2d4d_52%,#a5353f_72%,#b93f34_84%,#c4472b_96%)]">
          <div className="absolute top-0 right-0 h-full w-[70px] bg-[linear-gradient(180deg,#c4472b_0%,#c6492c_30%,#bb4234_45%,#ae3d40_60%,#9c3649_80%,#923153_100%)]" />
          <svg className="absolute top-0 right-0 h-[1056px] w-[1000px]" viewBox="0 0 1000 1056">
            <path d="M0 0h650l18 48H0z" fill="#8c1f3a" opacity=".12" />
            <path d="M1000 110L945 260V420L1000 560z" fill="#e0663a" opacity=".16" />
          </svg>
          <div className="absolute top-0 left-0 h-2 w-full bg-gradient-to-b from-black/50 to-transparent" />
          <div className="flex h-12 shrink-0 items-end gap-[115px] pl-[65px]">
            <svg className="h-[18px] w-[46px]" viewBox="0 0 46 18">
              <path d="M1 8V1q0-1 1-1h17l3 3h22q1 0 1 1v5z" fill="#d9d7d4" />
              <path d="M4 2h13v2H4z" fill="#e2946a" />
              <path d="M0 8h46v10H0z" fill="#b86a3c" />
              <path d="M0 8h46v3H0z" fill="#c98050" />
            </svg>
            <svg className="h-[26px] w-[36px]" viewBox="0 0 36 26">
              <path d="M0 0h25l11 10v16H0z" fill="#c9c9c7" />
              <path d="M25 0l11 10q-8-3-11-1z" fill="#efefed" />
              <path d="M5 8.500h18M5 10.500h18M5 13h26M5 15.500h26M5 18h8M5 21h26M5 23.500h26" stroke="#8f8f8c" strokeDasharray="4 .6" />
            </svg>
          </div>
          <div className="relative flex h-[1008px] w-[1800px] shrink-0 flex-col rounded-t-[6px] bg-[#f2f1ef] shadow-[0_6px_26px_rgba(0,0,0,0.6)]">
            <TitleBar />
            <div className="flex min-h-0 grow pt-[13px]">
              <div className="flex w-[598px] shrink-0 flex-col">
                <Controls />
                <div className="flex h-[6px] shrink-0 items-center justify-center"><Grip /></div>
                <Logs />
                <StatusLines />
              </div>
              <div className="flex w-[6px] shrink-0 flex-col items-center pt-[464px]"><Grip vertical /></div>
              <div className="relative flex w-[1196px] shrink-0 flex-col">
                <DetailPane />
                <div className="absolute top-[467px] left-[592px]"><Grip /></div>
                <PcaPane />
              </div>
            </div>
          </div>
        </main>
      </div>
    </div>
  );
}
